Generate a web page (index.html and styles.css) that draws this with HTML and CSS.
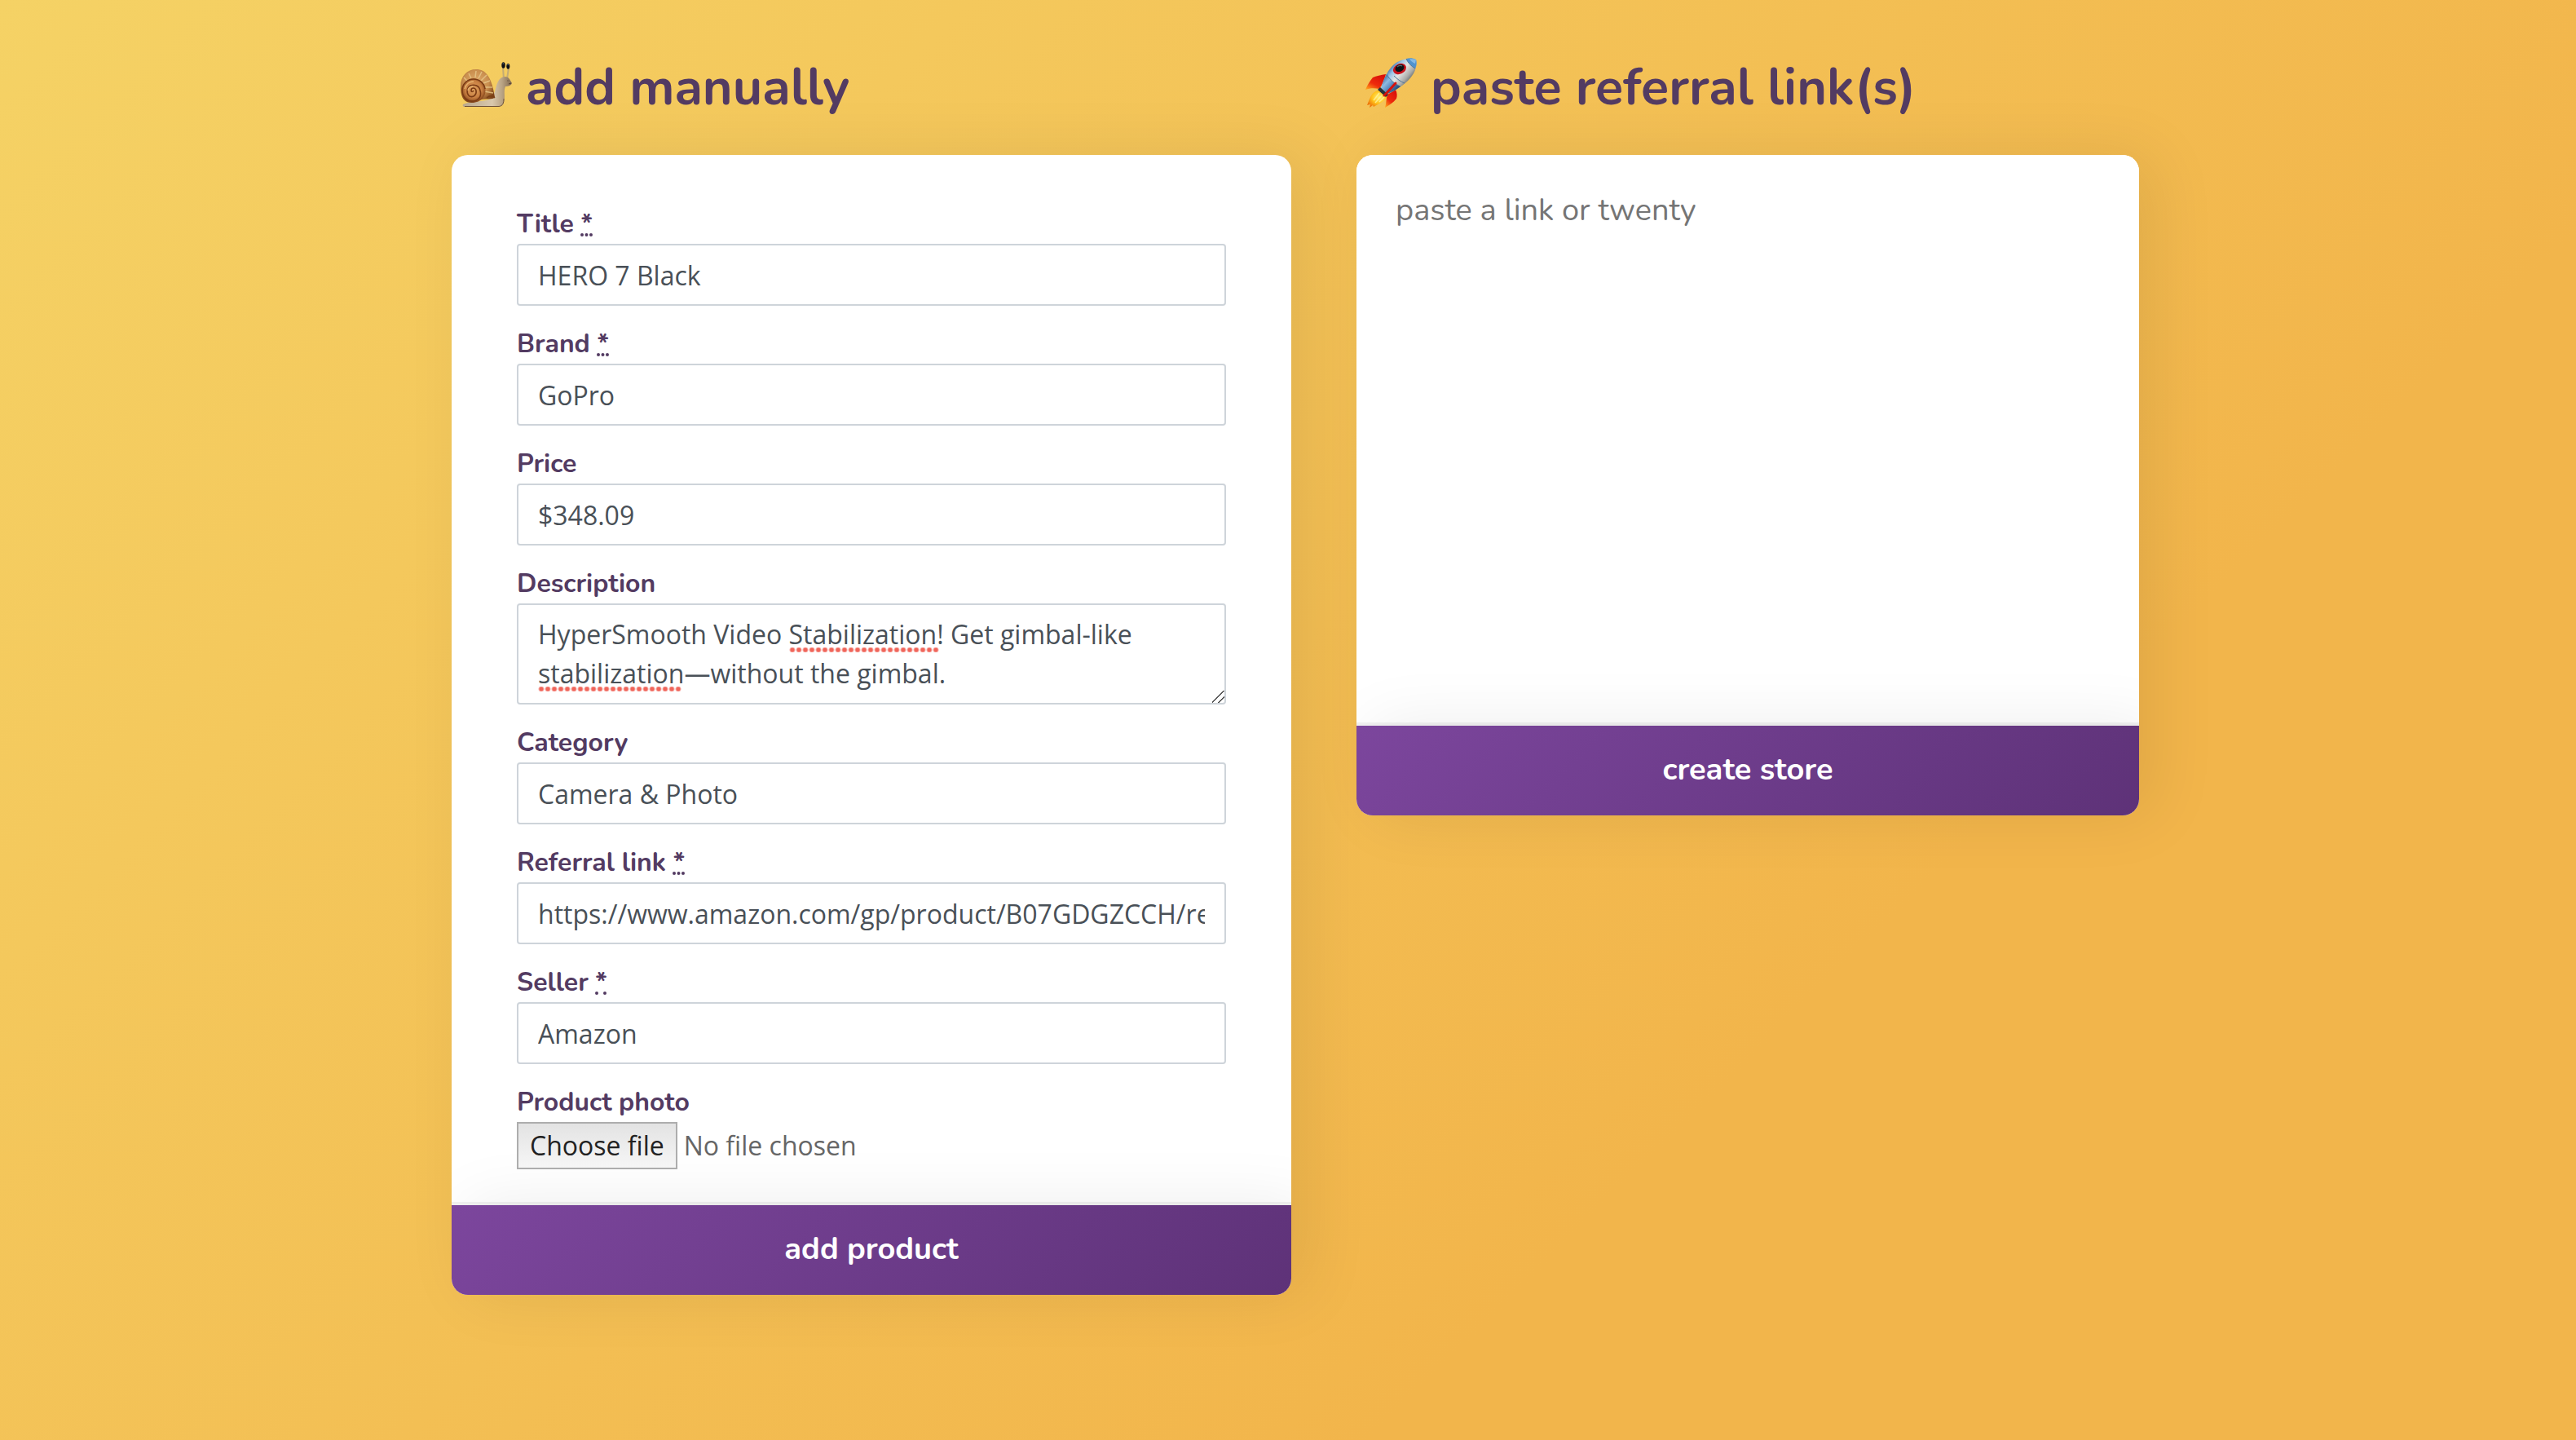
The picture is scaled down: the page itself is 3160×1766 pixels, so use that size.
FILE: index.html
```
<!DOCTYPE html>
<html lang="en">
<head>
  <meta charset="utf-8">
  <meta name="viewport" content="width=device-width, initial-scale=1">
  <title>Add products</title>
  <link rel="stylesheet" href="styles.css">
</head>
<body>
  <main class="page">
    <section class="column">
      <h1 class="heading">
        <svg class="heading-icon" viewBox="0 0 76 76" aria-hidden="true">
          <defs>
            <radialGradient id="shell" cx="0.45" cy="0.4" r="0.62">
              <stop offset="0" stop-color="#e0ad6c"/>
              <stop offset="0.6" stop-color="#c98e4e"/>
              <stop offset="1" stop-color="#7d4217"/>
            </radialGradient>
            <radialGradient id="whorl" cx="0.5" cy="0.45" r="0.58">
              <stop offset="0" stop-color="#dfa15f"/>
              <stop offset="0.6" stop-color="#c98042"/>
              <stop offset="1" stop-color="#7a3c14"/>
            </radialGradient>
            <linearGradient id="slug" x1="0" y1="0" x2="1" y2="0">
              <stop offset="0" stop-color="#b8a68b"/>
              <stop offset="0.6" stop-color="#d9c8ac"/>
              <stop offset="0.8" stop-color="#b9a384"/>
              <stop offset="1" stop-color="#7f674d"/>
            </linearGradient>
          </defs>
          <path d="M62 31 L61 17 M66 31 L68 17" stroke="#c4ac74" stroke-width="2" fill="none"/>
          <path d="M12 62 C22 57 36 60 46 55 C52 50 51 41 55 34 C58 27 66 26 69 31 L72 36 C71 39 67 40 64 40 C61 46 65 55 61 62 C60 64 57 64 54 64 L14 65 C12 65 11 63 12 62 Z" fill="url(#slug)"/>
          <path d="M14 64.500 L56 64.500 C61 64 62 60 62 55" stroke="#6d523a" stroke-width="1" fill="none"/>
          <path d="M9 40 C9 27 17 19 28 19 C40 19 47 28 51 53 C49 57 39 54 31 57 C25 62 17 60 14 57 C10 53 9 47 9 40 Z" fill="url(#shell)"/>
          <g stroke="#e8c98c" stroke-width="1.500" fill="none" opacity="0.8">
            <path d="M27 29 L28 21 M31 30 L35 22 M34 33 L41 26 M37 36 L45 33 M38 41 L48 41 M38 46 L49 48"/>
            <path d="M22 30 L19 24 M17 33 L13 29"/>
          </g>
          <path d="M41 54 C46 50 49 52 51 54" stroke="#7a3f16" stroke-width="1.500" fill="none"/>
          <circle cx="25" cy="45" r="14.500" fill="url(#whorl)"/>
          <path d="M39 43 C38 36 32 31 25 31 C17 31 11 37 11 45 C11 53 17 59 25 58 C32 57 35 51 33 45 C32 39 26 37 21 39 C16 42 16 49 20 52 C25 54 29 50 28 45 C27 41 22 41 22 45 C22 47 24 47 25 45" fill="none" stroke="#7a3b15" stroke-width="1.600"/>
          <path d="M14 43 C15 37 20 34 25 34 M18 45 C18 42 21 40 24 40" fill="none" stroke="#efc07c" stroke-width="1.400" opacity="0.8"/>
          <ellipse cx="61.500" cy="14" rx="2.200" ry="3.800" fill="#0d0d12"/>
          <ellipse cx="67.300" cy="15.300" rx="2" ry="3.400" fill="#0d0d12"/>
          <path d="M60.500 12 h1.500 M66.500 13.500 h1.500" stroke="#6f86a0" stroke-width="1"/>
          <path d="M71 36 L68 37" stroke="#54402f" stroke-width="1"/>
          <circle cx="67" cy="33" r="0.900" fill="#7c6650"/>
        </svg>
        <span>add manually</span>
      </h1>
      <form class="card">
        <div class="fields">
          <div class="field">
            <label class="label" for="title">Title <abbr class="required" title="required">*</abbr></label>
            <input class="control" id="title" type="text" value="HERO 7 Black" required>
          </div>
          <div class="field">
            <label class="label" for="brand">Brand <abbr class="required" title="required">*</abbr></label>
            <input class="control" id="brand" type="text" value="GoPro" required>
          </div>
          <div class="field">
            <label class="label" for="price">Price</label>
            <input class="control" id="price" type="text" value="$348.09">
          </div>
          <div class="field">
            <label class="label" for="description">Description</label>
            <div class="spellchecked">
              <textarea class="control control-multiline" id="description" rows="2" spellcheck="false">HyperSmooth Video Stabilization! Get gimbal-like stabilization—without the gimbal.</textarea>
              <span class="squiggle squiggle-first" aria-hidden="true"></span>
              <span class="squiggle squiggle-second" aria-hidden="true"></span>
            </div>
          </div>
          <div class="field">
            <label class="label" for="category">Category</label>
            <input class="control" id="category" type="text" value="Camera &amp; Photo">
          </div>
          <div class="field">
            <label class="label" for="referral">Referral link <abbr class="required" title="required">*</abbr></label>
            <input class="control" id="referral" type="text" value="https://www.amazon.com/gp/product/B07GDGZCCH/ref" required>
          </div>
          <div class="field">
            <label class="label" for="seller">Seller <abbr class="required" title="required">*</abbr></label>
            <input class="control" id="seller" type="text" value="Amazon" required>
          </div>
          <div class="field">
            <label class="label" for="photo">Product photo</label>
            <div class="file">
              <span class="file-button">Choose file</span>
              <span class="file-name">No file chosen</span>
              <input class="file-input" id="photo" type="file">
            </div>
          </div>
        </div>
        <button class="submit" type="submit">add product</button>
      </form>
    </section>

    <section class="column">
      <h1 class="heading">
        <svg class="heading-icon" viewBox="-2 0 76 76" aria-hidden="true">
          <defs>
            <linearGradient id="hull" gradientUnits="userSpaceOnUse" x1="34" y1="18" x2="58" y2="38">
              <stop offset="0" stop-color="#2f63a0"/>
              <stop offset="0.25" stop-color="#9cc4e6"/>
              <stop offset="0.5" stop-color="#e4e6e4"/>
              <stop offset="0.8" stop-color="#a9aba8"/>
              <stop offset="1" stop-color="#5f6668"/>
            </linearGradient>
            <linearGradient id="tail" gradientUnits="userSpaceOnUse" x1="27" y1="28" x2="46" y2="46">
              <stop offset="0" stop-color="#2a5a94"/>
              <stop offset="0.35" stop-color="#8ebbe2"/>
              <stop offset="0.65" stop-color="#4d82b8"/>
              <stop offset="1" stop-color="#1f3f66"/>
            </linearGradient>
            <linearGradient id="fin" x1="0.8" y1="0" x2="0.1" y2="1">
              <stop offset="0" stop-color="#d80e0a"/>
              <stop offset="0.6" stop-color="#ee2a0c"/>
              <stop offset="1" stop-color="#ffa31a"/>
            </linearGradient>
            <radialGradient id="flame" cx="0.6" cy="0.4" r="0.65">
              <stop offset="0" stop-color="#fff27a"/>
              <stop offset="0.55" stop-color="#ffc21c"/>
              <stop offset="1" stop-color="#ee7208"/>
            </radialGradient>
          </defs>
          <path d="M22 45 C15 47 13 53 11 58 L9 63 L13 62 L12 66 L16 63 L17 65 C24 61 31 58 34 52 L29 46 Z" fill="url(#flame)"/>
          <path d="M32 25 C26 26 20 27 16 29 C12 34 9 39 7 44 C12 42 18 42 24 43 L29 35 Z" fill="url(#fin)"/>
          <path d="M44 44 C46 48 46 52 45 55 C41 60 36 63 31 66 C33 60 32 55 34 50 Z" fill="url(#fin)"/>
          <path d="M69 7 C58 4 46 8 39 16 C33 23 29 32 26 42 L34 49 C42 46 52 40 59 33 C67 25 71 16 69 7 Z" fill="url(#hull)"/>
          <path d="M33 25 C30 30 28 36 26 42 L34 49 C40 47 45 44 50 40 C43 37 37 32 33 25 Z" fill="url(#tail)"/>
          <path d="M69 7 C65 5 61 5 57 6 C59 11 63 15 68 18 C70 14 70 10 69 7 Z" fill="#4f93cf"/>
          <path d="M69 7 C66 6 63 6 61 6.500 C63 9 65 11 68 12 Z" fill="#83b9e4"/>
          <path d="M33 25 C37 32 43 37 50 40 M57 6 C59 11 63 15 68 18 M42 27 C46 31 50 34 55 36" stroke="#4f7699" stroke-width="1" fill="none"/>
          <path d="M25 41 L35 50 L32 53 L22 44 Z" fill="#27313a"/>
          <path d="M44 36 L33 48 L30 51" stroke="#d5130d" stroke-width="3" fill="none" stroke-linecap="round"/>
          <path d="M27 51 L19 60 M30 53 L24 59 M24 48 L17 57" stroke="#fff3a0" stroke-width="1.400" fill="none" opacity="0.8"/>
          <ellipse cx="49" cy="18.500" rx="8.400" ry="6.200" transform="rotate(-25 49 18.500)" fill="#c9121b"/>
          <ellipse cx="49" cy="17.500" rx="5.700" ry="4.300" transform="rotate(-25 49 17.500)" fill="#0c1216"/>
          <path d="M46 16 C48 14 51 14 52 15" stroke="#4f6670" stroke-width="1.200" fill="none"/>
        </svg>
        <span>paste referral link(s)</span>
      </h1>
      <form class="card">
        <textarea class="links" aria-label="Referral links" placeholder="paste a link or twenty"></textarea>
        <button class="submit" type="submit">create store</button>
      </form>
    </section>
  </main>
</body>
</html>
```
FILE: styles.css
```
* {
  box-sizing: border-box;
}

body {
  margin: 0;
  min-height: 100vh;
  background: linear-gradient(135deg, #f5d265 0%, #f2b54b 70%);
  color: #533b62;
  font-family: Nunito, "Open Sans", sans-serif;
  font-size: 32px;
}

.page {
  display: grid;
  grid-template-columns: 103fr 96fr;
  gap: 80px;
  align-items: start;
  max-width: 2088px;
  margin: 0 auto;
  padding: 66px 0 80px 18px;
}

.heading {
  display: flex;
  gap: 13px;
  margin: 0 0 42px;
  padding-left: 2px;
  font-size: 63px;
  font-weight: 700;
  line-height: 82px;
}

.heading-icon {
  flex: none;
  width: 76px;
  height: 76px;
}

.card {
  display: flex;
  flex-direction: column;
  overflow: hidden;
  border-radius: 20px;
  background: #fff;
  box-shadow: 20px 0 80px rgba(0, 0, 0, 0.08);
}

.fields {
  display: flex;
  flex-direction: column;
  gap: 23px;
  padding: 61px 80px 44px;
}

.field {
  display: flex;
  flex-direction: column;
}

.label {
  font-weight: 700;
  line-height: 48px;
}

.required {
  text-decoration: underline dotted 4px;
  text-underline-offset: 1px;
  text-decoration-skip-ink: none;
}

.control {
  display: block;
  width: 100%;
  height: 76px;
  margin: 0;
  padding: 12px 24px;
  border: 2px solid #ced4da;
  border-radius: 4px;
  outline: none;
  background: #fff;
  color: #495057;
  font: 32px/48px "Open Sans", sans-serif;
}

.control-multiline {
  height: 124px;
  overflow: hidden;
  resize: vertical;
}

.control-multiline::-webkit-resizer {
  background: linear-gradient(135deg, transparent 46%, #555 46% 53%, transparent 53% 72%, #555 72% 79%, transparent 79%);
}

.spellchecked {
  position: relative;
}

.squiggle {
  position: absolute;
  height: 6px;
  background: radial-gradient(circle, #f0655a 2px, transparent 4px) 0 0 / 8px 6px repeat-x;
  pointer-events: none;
}

.squiggle-first {
  top: 54px;
  left: 334px;
  width: 184px;
}

.squiggle-second {
  top: 102px;
  left: 26px;
  width: 176px;
}

.file {
  position: relative;
  display: flex;
  align-items: center;
  gap: 8px;
  font: 32px/44px "Open Sans", sans-serif;
}

.file-button {
  padding: 5px 14px;
  border: 2px solid #adadad;
  background: linear-gradient(#e3e3e3, #f6f6f6);
  color: #222;
}

.file-name {
  color: #666;
}

.file-input {
  position: absolute;
  inset: 0;
  width: 100%;
  opacity: 0;
}

.links {
  display: block;
  width: 100%;
  height: 700px;
  padding: 42px 48px;
  border: 0;
  outline: none;
  resize: none;
  background: #fff;
  color: #533b62;
  font: 38px/52px Nunito, "Open Sans", sans-serif;
}

.links::placeholder {
  color: #757575;
}

.submit {
  padding: 28px 24px 30px;
  border: 0;
  background: linear-gradient(135deg, #7c469d, #5e3278);
  box-shadow: 0 -4px 0 rgba(0, 0, 0, 0.05), 20px 0 80px rgba(0, 0, 0, 0.08);
  color: #fff;
  font: 700 38px/52px Nunito, "Open Sans", sans-serif;
}
```
